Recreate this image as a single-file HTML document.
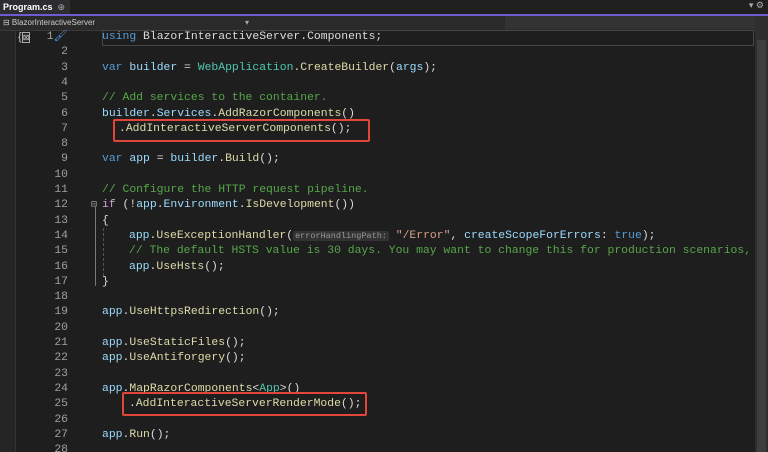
<!DOCTYPE html>
<html><head><meta charset="utf-8"><style>
body{margin:0;width:768px;height:452px;overflow:hidden;background:#1e1e1e;font-family:"Liberation Sans",sans-serif;position:relative}
.tabbar{position:absolute;left:0;top:0;width:768px;height:14px;background:#1f1f1f}
.tab{position:absolute;left:0;top:0;width:70px;height:14px;background:#2d2d30;color:#fff;font-size:9px;font-weight:bold;line-height:14px;padding-left:3px;box-sizing:border-box}
.purple{position:absolute;left:0;top:14px;width:768px;height:2px;background:#6f5bd0}
.nav{position:absolute;left:0;top:16px;width:755px;height:14px;background:#2a2a2a;border-bottom:1px solid #3a3a3a}
.nav span{position:absolute;top:0;font-size:8px;color:#ccc;line-height:14px}
.dd{position:absolute;top:16px;width:250px;height:13px;background:#333}
.vbar{position:absolute;left:755px;top:16px;width:13px;height:436px;background:#2e2e2e}
.thumb{position:absolute;left:757px;top:40px;width:9px;height:412px;background:#3e3e3e}
.left{position:absolute;left:0;top:31px;width:15px;height:421px;background:#252526;border-right:1px solid #333}
.code{position:absolute;left:0;top:30px;width:754px;height:422px;overflow:hidden;font-family:"Liberation Mono",monospace;font-size:11.4px;color:#dcdcdc}
.l{position:absolute;left:0;height:15.3px;line-height:15.3px;white-space:pre;width:754px}
.n{position:absolute;left:40px;width:28px;text-align:right;color:#a0a0a0}
.c{position:absolute;left:102px}
.k{color:#569cd6}.t{color:#4ec9b0}.m{color:#dcdcaa}.v{color:#9cdcfe}.cm{color:#57a64a}.s{color:#d69d85}.p{color:#d8a0df}
.hint{background:#333;color:#999;font-size:8.5px;padding:0 2px;border-radius:2px}
.box{position:absolute;border:2px solid #e0463a;border-radius:2px}
</style></head><body>
<div class="tabbar"><div class="tab">Program.cs <span style="font-weight:normal;color:#aaa">&nbsp;⊕ ✕</span></div>
<span style="position:absolute;right:4px;top:0;color:#aaa;font-size:9px">▾ ⚙</span></div>
<div class="purple"></div>
<div class="nav"><span style="left:3px">⊟ BlazorInteractiveServer</span><span style="left:245px;color:#aaa">▾</span><span style="left:742px;color:#aaa">▾</span></div>
<div class="dd" style="left:505px"></div>
<div class="vbar"></div><div class="thumb"></div>
<div style="position:absolute;left:102px;top:30px;width:650px;height:14px;border:1px solid #464646"></div>
<div class="left"></div>
<div style="position:absolute;left:18px;top:31px;color:#ccc;font-size:11px">{<span style="font-size:8px;border:1px solid #aaa">⊠</span></div>
<div class="code">
<div class="l" style="top:0"><span class="n">1<span style="color:#4a90d9">🖌</span></span><span class="c"><span class="k">using</span> BlazorInteractiveServer.Components;</span></div>
<div class="l" style="top:15.3px"><span class="n">2</span></div>
<div class="l" style="top:30.6px"><span class="n">3</span><span class="c"><span class="k">var</span> <span class="v">builder</span> = <span class="t">WebApplication</span>.<span class="m">CreateBuilder</span>(<span class="v">args</span>);</span></div>
<div class="l" style="top:45.9px"><span class="n">4</span></div>
<div class="l" style="top:61.2px"><span class="n">5</span><span class="c cm">// Add services to the container.</span></div>
<div class="l" style="top:76.5px"><span class="n">6</span><span class="c"><span class="v">builder</span>.<span class="v">Services</span>.<span class="m">AddRazorComponents</span>()</span></div>
<div class="l" style="top:91.8px"><span class="n">7</span><span class="c" style="left:119px">.<span class="m">AddInteractiveServerComponents</span>();</span></div>
<div class="l" style="top:107.1px"><span class="n">8</span></div>
<div class="l" style="top:122.4px"><span class="n">9</span><span class="c"><span class="k">var</span> <span class="v">app</span> = <span class="v">builder</span>.<span class="m">Build</span>();</span></div>
<div class="l" style="top:137.7px"><span class="n">10</span></div>
<div class="l" style="top:153px"><span class="n">11</span><span class="c cm">// Configure the HTTP request pipeline.</span></div>
<div class="l" style="top:168.3px"><span class="n">12</span><span style="position:absolute;left:91px;color:#999;font-size:10px">⊟</span><span class="c"><span class="p">if</span> (!<span class="v">app</span>.<span class="v">Environment</span>.<span class="m">IsDevelopment</span>())</span></div>
<div class="l" style="top:183.6px"><span class="n">13</span><span class="c">{</span></div>
<div class="l" style="top:198.9px"><span class="n">14</span><span class="c" style="left:129px"><span class="v">app</span>.<span class="m">UseExceptionHandler</span>(<span class="hint">errorHandlingPath:</span> <span class="s">"/Error"</span>, <span class="v">createScopeForErrors</span>: <span class="k">true</span>);</span></div>
<div class="l" style="top:214.2px"><span class="n">15</span><span class="c cm" style="left:129px">// The default HSTS value is 30 days. You may want to change this for production scenarios, see</span></div>
<div class="l" style="top:229.5px"><span class="n">16</span><span class="c" style="left:129px"><span class="v">app</span>.<span class="m">UseHsts</span>();</span></div>
<div class="l" style="top:244.8px"><span class="n">17</span><span class="c">}</span></div>
<div class="l" style="top:260.1px"><span class="n">18</span></div>
<div class="l" style="top:275.4px"><span class="n">19</span><span class="c"><span class="v">app</span>.<span class="m">UseHttpsRedirection</span>();</span></div>
<div class="l" style="top:290.7px"><span class="n">20</span></div>
<div class="l" style="top:306px"><span class="n">21</span><span class="c"><span class="v">app</span>.<span class="m">UseStaticFiles</span>();</span></div>
<div class="l" style="top:321.3px"><span class="n">22</span><span class="c"><span class="v">app</span>.<span class="m">UseAntiforgery</span>();</span></div>
<div class="l" style="top:336.6px"><span class="n">23</span></div>
<div class="l" style="top:351.9px"><span class="n">24</span><span class="c"><span class="v">app</span>.<span class="m">MapRazorComponents</span>&lt;<span class="t">App</span>&gt;()</span></div>
<div class="l" style="top:367.2px"><span class="n">25</span><span class="c" style="left:129px">.<span class="m">AddInteractiveServerRenderMode</span>();</span></div>
<div class="l" style="top:382.5px"><span class="n">26</span></div>
<div class="l" style="top:397.8px"><span class="n">27</span><span class="c"><span class="v">app</span>.<span class="m">Run</span>();</span></div>
<div class="l" style="top:413.1px"><span class="n">28</span></div>
</div>
<div style="position:absolute;left:95px;top:206px;width:1px;height:80px;background:#777"></div>
<div style="position:absolute;left:103px;top:228px;width:0;height:48px;border-left:1px dashed #555"></div>
<div class="box" style="left:113px;top:119px;width:253px;height:19px"></div>
<div class="box" style="left:122px;top:392px;width:241px;height:20px"></div>
</body></html>
